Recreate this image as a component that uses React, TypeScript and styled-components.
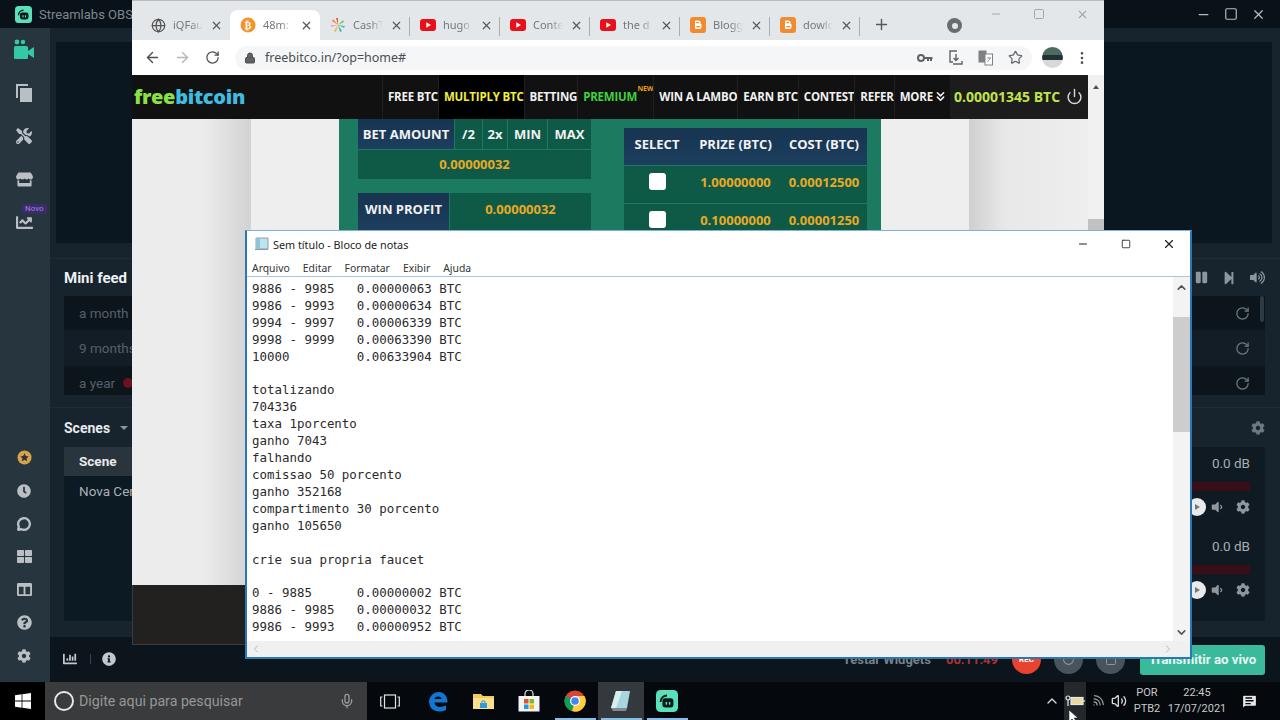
import React from "react";
import styled, { createGlobalStyle } from "styled-components";
import {
  ArrowLeft, ArrowRight, RotateCw, Lock, Star, X, Plus, Minus, Square, Globe, Power, ChevronsDown,
  ChevronUp, ChevronDown, ChevronLeft, ChevronRight, MessageCircle, Mic, Wifi, MessageSquareText, Volume2, EllipsisVertical
} from "lucide-react";
import {
  FaPause, FaStepForward, FaVolumeUp, FaVolumeDown, FaCog, FaInfoCircle, FaChartBar, FaTools, FaStore, FaChartLine, FaClock, FaThLarge, FaColumns, FaQuestionCircle
} from "react-icons/fa";

const Global = createGlobalStyle`
  html, body { margin: 0; padding: 0; background: #0a1219; overflow: hidden; }
  #root { width: 1280px; height: 720px; }
  * { box-sizing: border-box; }
`;

const Desktop = styled.div`
  position: relative; width: 1280px; height: 720px; overflow: hidden;
  display: flex; flex-direction: column; font-family: Roboto, sans-serif;
`;

/* ---------- OBS ---------- */
const Obs = styled.div`flex: 1; min-height: 0; display: flex; flex-direction: column; background: #17242d;`;
const ObsTitle = styled.div`
  height: 28px; flex: none; background: #0a1219; display: flex; align-items: center; padding: 0 0 0 15px;
  color: #7d878e; font-size: 13px; gap: 7px;
`;
const ObsControls = styled.div`
  margin-left: auto; display: flex; gap: 13px; padding-right: 14px; color: #b5bcc1; align-items: center;
`;
const ObsBody = styled.div`flex: 1; min-height: 0; display: flex;`;
const Sidebar = styled.div`
  width: 50px; background: #27353f; display: flex; flex-direction: column; justify-content: space-between;
  padding: 6px 0 10px; flex: none;
`;
const SideGroup = styled.div<{ $gap: number; $h: number }>`
  display: flex; flex-direction: column; gap: ${p => p.$gap}px;
  & > * { height: ${p => p.$h}px; }
`;
const SideIcon = styled.div<{ $color?: string }>`
  position: relative; width: 48px; display: flex; align-items: center; justify-content: center;
  color: ${p => p.$color || "#b9bfc4"};
`;
const NewBadge = styled.span`
  position: absolute; left: 22px; top: -2px; font-size: 8px; line-height: 10px; padding: 0 3px;
  background: #3a2d66; color: #a47fe8; border-radius: 2px;
`;
const Main = styled.div`flex: 1; min-width: 0; display: flex; flex-direction: column;`;
const DisplayWrap = styled.div`padding: 14px 8px 0 6px;`;
const Display = styled.div`height: 201px; background: #0b1720;`;
const FeedPanel = styled.div`
  margin-top: 15px; height: 150px; flex: none; border-top: 1px solid #1e2c36; border-bottom: 1px solid #1e2c36;
  padding: 0 15px 0 14px;
`;
const PanelHead = styled.div`
  height: 37px; display: flex; align-items: center; justify-content: space-between; color: #eef1f3;
  font-size: 15px; font-weight: 700;
`;
const HeadIcons = styled.div`display: flex; gap: 14px; color: #8d969c; align-items: center;`;
const FeedList = styled.div`position: relative; display: flex; flex-direction: column;`;
const FeedRow = styled.div<{ $alt?: boolean; $h: number; $pt?: number }>`
  height: ${p => p.$h}px; padding: ${p => p.$pt || 0}px 15px 0; display: flex; align-items: center; justify-content: space-between;
  background: ${p => p.$alt ? "#131d25" : "#0c151c"}; color: #566068; font-size: 13.5px;
`;
const Dot = styled.span`display: inline-block; width: 10px; height: 10px; border-radius: 50%; background: #6a1220; margin-left: 8px;`;
const Thumb = styled.span`position: absolute; right: 1px; top: 0; width: 4px; height: 26px; background: #2c3a44; border-radius: 2px;`;
const ReplayWrap = styled.span`color: #6e787f; display: flex;`;
const ScenesRow = styled.div`flex: 1; min-height: 0; display: flex; gap: 12px; padding: 0 15px 16px 14px;`;
const ScenesCol = styled.div`width: 560px; display: flex; flex-direction: column;`;
const MixerCol = styled.div`flex: 1; display: flex; flex-direction: column;`;
const ColHead = styled.div`
  height: 39px; padding-top: 1px; display: flex; align-items: center; justify-content: space-between; gap: 12px;
  color: #e6eaed; font-size: 14px; font-weight: 700;
`;
const SceneTitle = styled.div`display: flex; align-items: center; gap: 10px;`;
const Caret = styled.span`width: 0; height: 0; border: 4px solid transparent; border-top-color: #8d969c; margin-top: 4px;`;
const SceneList = styled.div`flex: 1; background: #0c1a24;`;
const SceneItem = styled.div<{ $on?: boolean }>`
  height: 29px; margin-top: ${p => p.$on ? 0 : 1}px; padding: 0 0 2px 15px; display: flex; align-items: center; font-size: 13.5px;
  background: ${p => p.$on ? "#2a343c" : "transparent"}; color: ${p => p.$on ? "#e8ebed" : "#a8b0b5"};
  font-weight: ${p => p.$on ? 700 : 400};
`;
const MixerList = styled.div`flex: 1; background: #0f1a22; padding: 7px 15px 0 0;`;
const MixerItem = styled.div`height: 83px; display: flex; flex-direction: column; align-items: flex-end;`;
const Db = styled.div`font-size: 13.5px; color: #a8aeb2; height: 18px; line-height: 18px;`;
const Meter = styled.div`align-self: stretch; height: 9px; margin-top: 10px; background: #3a0e18;`;
const Strip = styled.div`display: flex; align-items: center; color: #8f979c; margin-top: 4px; height: 24px; gap: 12px;`;
const Slider = styled.span`
  position: relative; width: 18px; height: 18px; border-radius: 50%; background: #e8eaeb; margin-right: -8px; display: flex; align-items: center; justify-content: center;
`;
const SliderTri = styled.span`width: 0; height: 0; border: 3px solid transparent; border-left: 5px solid #777; margin-left: 4px;`;
const Footer = styled.div`
  height: 45px; flex: none; background: #0c151c; display: flex; align-items: center; padding: 0 15px 2px 13px; color: #c3c8cc;
`;
const FootSep = styled.span`width: 1px; height: 10px; background: #38434b; margin: 0 11px 0 13px;`;
const FootRight = styled.div`margin-left: auto; display: flex; align-items: center; padding-top: 2px;`;
const TestBtn = styled.span`font-size: 13px; font-weight: 700; color: #77818a; margin-right: 15px;`;
const Timer = styled.span`font-size: 13px; font-weight: 700; color: #b3312f; margin-right: 14px;`;
const Round = styled.span<{ $red?: boolean }>`
  width: 29px; height: 29px; border-radius: 50%; background: ${p => p.$red ? "#e8432f" : "#49535a"};
  color: ${p => p.$red ? "#fff" : "#8d969c"}; display: flex; align-items: center; justify-content: center;
  font-size: 8px; font-weight: 700; margin-right: 13px;
`;
const GoLive = styled.span`
  width: 125px; height: 30px; background: #3ab99b; border-radius: 3px; color: #e8f7f3; display: flex;
  align-items: center; justify-content: center; font-size: 13.3px; font-weight: 700; margin-left: 2px;
`;

/* ---------- Chrome ---------- */
const Chrome = styled.div`
  position: absolute; left: 132px; top: 0; width: 972px; height: 645px; display: flex; flex-direction: column;
`;
const TabStrip = styled.div`
  height: 40px; flex: none; background: #e4e7ea; border-top: 1px solid #b9bdc1; display: flex; align-items: flex-end; padding-left: 8px; position: relative;
`;
const Tab = styled.div<{ $active?: boolean; $sep?: boolean }>`
  position: relative; width: 90px; height: 30px; flex: none; display: flex; align-items: center; padding-left: 10px;
  background: ${p => p.$active ? "#fff" : "transparent"}; border-radius: 8px 8px 0 0; color: #74787c; font-size: 11px;
  ${p => p.$sep && `&:after { content: ""; position: absolute; right: 0; top: 7px; height: 19px; width: 1px; background: #a9adb1; }`}
`;
const Favicon = styled.span`width: 16px; height: 16px; flex: none; display: flex; align-items: center; justify-content: center;`;
const TabTitle = styled.span`
  margin-left: 7px; width: 30px; height: 16px; line-height: 16px; flex: none; overflow: hidden; white-space: nowrap; font-family: "Noto Sans", sans-serif;
  -webkit-mask-image: linear-gradient(90deg, #000 60%, transparent); mask-image: linear-gradient(90deg, #000 60%, transparent);
`;
const TabClose = styled.span`margin-left: 7px; display: flex; color: #55595d;`;
const NewTab = styled.span`margin-left: 13px; margin-bottom: 7px; display: flex; color: #55595d;`;
const Profile = styled.span`margin-left: 57px; margin-bottom: 7px; width: 15px; height: 15px; border-radius: 50%; background: #6a6d70; display: flex; align-items: center; justify-content: center;`;
const ProfileDot = styled.span`width: 6px; height: 6px; border-radius: 50%; background: #e4e7ea;`;
const WinCtl = styled.div`position: absolute; top: 7px; right: 15px; display: flex; gap: 31px; color: #a3a7ab;`;
const Toolbar = styled.div`
  height: 35px; flex: none; background: #fff; display: flex; align-items: center; padding-left: 5px; color: #5f6368;
`;
const NavBtn = styled.span<{ $dim?: boolean }>`width: 30px; display: flex; justify-content: center; color: ${p => p.$dim ? "#b4b7ba" : "#4b4f53"};`;
const Omnibox = styled.div`
  margin-left: 8px; width: 797px; height: 24px; border-radius: 12px; background: #f5f6f7; display: flex; align-items: center; padding-left: 9px;
  font-family: "Noto Sans", sans-serif; font-size: 12.5px; color: #4a4e52;
`;
const Url = styled.span`margin-left: 9px;`;
const OmniIcons = styled.span`margin-left: auto; display: flex; gap: 15px; padding-right: 9px; color: #666a6e; align-items: center;`;
const Avatar = styled.span`
  margin-left: 10px; width: 21px; height: 21px; border-radius: 50%;
  background: linear-gradient(#4d6a5f 0 40%, #22303a 40% 60%, #d8d8d8 60%);
`;
const Kebab = styled.span`margin-left: 11px; display: flex; color: #4b4f53;`;
const SiteArea = styled.div`height: 510px; flex: none; display: flex; position: relative;`;
const SiteColumn = styled.div`width: 956px; display: flex; flex-direction: column; height: 510px;`;
const SiteBar = styled.div`
  height: 44px; flex: none; background: #111; display: flex; align-items: center;
  font-family: "Open Sans", sans-serif; font-weight: 700; font-size: 11.5px; color: #f2f2f2; letter-spacing: -0.2px;
`;
const Logo = styled.div`
  width: 250px; flex: none; padding: 0 0 2px 2px; font-family: "Open Sans", sans-serif; font-size: 20px; font-weight: 800; letter-spacing: -0.3px; color: #3fbde0;
`;
const LogoFree = styled.span`color: #8be04a;`;
const NavItem = styled.div<{ $color?: string; $black?: boolean; $mr?: number }>`
  height: 100%; display: flex; align-items: center; color: ${p => p.$color || "#f2f2f2"};
  background: ${p => p.$black ? "#000" : "transparent"}; white-space: nowrap; position: relative;
  border-left: 1px solid #1f1f1f; padding: 0 0 2px 5px; margin-right: ${p => p.$mr || 0}px;
`;
const NewTag = styled.sup`position: absolute; right: -16px; top: 10px; color: #e69a12; font-size: 7px; line-height: 8px;`;
const Balance = styled.div`
  margin-left: auto; flex: none; height: 100%; width: 138px; background: #1c1c1c; display: flex; align-items: center; padding: 0 0 2px 4px;
  color: #c2e24a; font-size: 14px; letter-spacing: 0; gap: 6px; white-space: nowrap;
`;
const PowerWrap = styled.span`display: flex; color: #d8d8d8;`;
const Page = styled.div`height: 466px; flex: none; display: flex; background: #eee; overflow: hidden;`;
const GutterL = styled.div`width: 119px; flex: none; background: linear-gradient(90deg, #ececec 0 60%, #d2d2d2 100%);`;
const GutterR = styled.div`flex: 1; background: linear-gradient(90deg, #cfcfcf 0, #e8e8e8 30%, #eee 100%);`;
const Content = styled.div`width: 718px; flex: none; background: #eee; padding-left: 88px;`;
const GreenPanel = styled.div`
  width: 542px; height: 112px; background: #1b7a5f; display: flex; padding: 0 14px 0 19px; gap: 33px;
  font-family: "Open Sans", sans-serif; font-weight: 700; font-size: 13px; color: #f2f2f2;
`;
const BetCol = styled.div`width: 233px; display: flex; flex-direction: column;`;
const BetRow = styled.div`display: flex; height: 30px; gap: 1px;`;
const NavyLabel = styled.div<{ $w: number }>`
  width: ${p => p.$w}px; flex: none; background: linear-gradient(#173450, #1d3e5e); display: flex; align-items: center; justify-content: center; white-space: nowrap;
`;
const SmallBtn = styled.div<{ $w: number }>`width: ${p => p.$w}px; flex: none; background: #0f5a47; display: flex; align-items: center; justify-content: center;`;
const Amount = styled.div<{ $mt?: number; $h: number }>`
  flex: 1 0 auto; min-height: ${p => p.$h}px; max-height: ${p => p.$h}px; background: #0f5a47; margin-top: ${p => p.$mt || 0}px; padding-bottom: 2px; display: flex; align-items: center; justify-content: center; color: #e8a925;
`;
const ProfitRow = styled.div`display: flex; height: 37px; gap: 1px; margin-top: 14px; & > * { padding-bottom: 6px; }`;
const Table = styled.div`width: 243px; margin-top: 9px; display: flex; flex-direction: column; gap: 1px;`;
const TableRow = styled.div<{ $head?: boolean }>`
  display: grid; grid-template-columns: 66px 91px 86px; height: 37px; padding-bottom: 6px; flex: none; align-items: center; justify-items: center;
  background: ${p => p.$head ? "linear-gradient(#173450, #1d3e5e)" : "#0f5a47"}; color: ${p => p.$head ? "#f2f2f2" : "#e8a925"};
`;
const Check = styled.span`width: 17px; height: 17px; border-radius: 3px; background: #fff; display: block;`;
const Scrollbar = styled.div`
  width: 16px; flex: none; height: 510px; background: #f1f1f1; display: flex; flex-direction: column; align-items: center; padding-top: 7px;
`;
const UpTri = styled.span`width: 0; height: 0; border: 3px solid transparent; border-bottom: 4px solid #505050;`;
const SbThumb = styled.span`width: 16px; height: 12px; background: #c1c1c1; margin-top: 130px;`;
const ChromeFoot = styled.div`flex: 1; background: #232120; border: 1px solid #363e42; border-top: 0;`;

/* ---------- Notepad ---------- */
const Notepad = styled.div`
  position: absolute; left: 245px; top: 230px; width: 947px; height: 429px; background: #fff;
  border: 2px solid #2a77b8; border-top: 1px solid #7fb2da; display: flex; flex-direction: column;
  font-family: "Noto Sans", sans-serif; color: #222;
`;
const NpTitle = styled.div`height: 26px; flex: none; display: flex; align-items: center; padding-left: 7px; font-size: 10.8px; gap: 4px;`;
const NpCtl = styled.div`margin-left: auto; display: flex; align-items: center; color: #222;`;
const NpCtlBtn = styled.span`width: 43px; display: flex; justify-content: center;`;
const NpMenu = styled.div`height: 20px; flex: none; display: flex; align-items: center; padding: 2px 0 0 5px; gap: 13px; font-size: 10.4px; color: #333; border-bottom: 1px solid #a8c6de;`;
const NpBody = styled.div`flex: 1; min-height: 0; display: flex;`;
const NpText = styled.pre`
  flex: 1; margin: 0; padding: 4px 0 0 5px; font-family: "DejaVu Sans Mono", monospace; font-size: 12.45px; line-height: 16.9px; color: #2a2a2a; overflow: hidden;
`;
const NpScroll = styled.div`width: 17px; flex: none; background: #f3f3f3; display: flex; flex-direction: column; align-items: center; color: #555;`;
const NpThumb = styled.span`width: 17px; height: 115px; background: #cdcdcd; margin-top: 23px; margin-bottom: auto;`;
const NpArrow = styled.span<{ $top?: number; $bottom?: number }>`display: flex; padding-top: ${p => p.$top || 0}px; padding-bottom: ${p => p.$bottom || 0}px;`;
const NpH = styled.div`height: 16px; flex: none; background: #f0f0f0; display: flex; align-items: center; justify-content: space-between; padding: 0 16px 0 3px; color: #bbb;`;

/* ---------- Taskbar ---------- */
const Taskbar = styled.div`height: 38px; flex: none; background: #05090e; display: flex; align-items: stretch; color: #e8e8e8;`;
const Start = styled.div`width: 45px; background: #000; display: flex; align-items: center; justify-content: center; flex: none;`;
const Search = styled.div`
  width: 322px; background: #3a3b3c; display: flex; align-items: center; padding: 0 12px 0 9px; color: #979797; font-size: 14.2px; gap: 5px; flex: none;
`;
const Cortana = styled.span`width: 20px; height: 20px; border: 2.5px solid #e8e8e8; border-radius: 50%; flex: none;`;
const MicWrap = styled.span`margin-left: auto; display: flex; color: #9a9a9a;`;
const Tile = styled.div<{ $active?: boolean; $open?: boolean; $ml?: number }>`
  position: relative; width: 46px; flex: none; display: flex; align-items: center; justify-content: center;
  background: ${p => p.$active ? "#34393d" : "transparent"}; margin-left: ${p => p.$ml || 0}px;
  ${p => p.$open && `&:after { content: ""; position: absolute; left: 3px; right: 2px; bottom: 0; height: 2px; background: #88bde6; }`}
`;
const Tray = styled.div`margin-left: auto; display: flex; align-items: center; color: #d8d8d8;`;
const TrayIcon = styled.span<{ $w: number; $active?: boolean; $dim?: boolean }>`
  width: ${p => p.$w}px; height: 100%; display: flex; align-items: center; justify-content: center;
  background: ${p => p.$active ? "#24282b" : "transparent"}; color: ${p => p.$dim ? "#9a9a9a" : "inherit"};
`;
const WifiTilt = styled.span`display: flex; transform: rotate(45deg);`;
const TrayText = styled.div<{ $w: number }>`width: ${p => p.$w}px; text-align: center; line-height: 16px; font-size: 11px; color: #c8c8c8;`;
const Cursor = styled.svg`position: absolute; left: 1069px; top: 710px;`;

const NotepadIcon = () => (
  <svg width="15" height="14" viewBox="0 0 15 14">
    <path d="M2 1h12v11H2z" fill="#bfe3ee" stroke="#6f8f9a" strokeWidth="0.8" />
    <path d="M2 1h4v11H2z" fill="#8fc3d6" />
    <path d="M1 12h13v1H1z" fill="#8a9aa3" />
  </svg>
);
const Yt = () => (
  <svg width="16" height="12" viewBox="0 0 16 12"><rect width="16" height="12" rx="3" fill="#e8101a" /><path d="M6.3 3.2v5.6L11 6z" fill="#fff" /></svg>
);
const Blogger = () => (
  <svg width="16" height="16" viewBox="0 0 16 16">
    <rect width="16" height="16" rx="3" fill="#f28a2e" />
    <path d="M5 4.5c0-.6.4-1 1-1h2.5c1.200 0 2 .8 2 2v1c0 .3.2.5.5.5s.5.3.5.6v2.400c0 1-.8 2-2 2H6c-.6 0-1-.4-1-1z" fill="#fff" />
    <path d="M6.800 5.700h1.700M6.800 9.600h3" stroke="#f28a2e" strokeWidth="1.2" strokeLinecap="round" />
  </svg>
);
const Btc = () => (
  <svg width="16" height="16" viewBox="0 0 16 16"><circle cx="8" cy="8" r="7.5" fill="#f4932a" /><text x="8" y="11.5" fontSize="10" fontWeight="700" textAnchor="middle" fill="#fff" fontFamily="DejaVu Sans">₿</text></svg>
);
const Pinwheel = () => (
  <svg width="16" height="16" viewBox="0 0 16 16">
    <path d="M8 8 6 1h2z" fill="#e9574b" /><path d="M8 8l5-5 1 2z" fill="#7ac943" /><path d="M8 8l7 1-1 2z" fill="#4db6e2" />
    <path d="M8 8l4 6-2 1z" fill="#46b58a" /><path d="M8 8l-2 7-2-1z" fill="#f2b632" /><path d="M8 8l-7 2V8z" fill="#e9a0c0" /><path d="M8 8 2 4l1-2z" fill="#f28a2e" />
  </svg>
);
const Camera = () => (
  <svg width="20" height="22" viewBox="0 0 20 22" fill="#34c9a6">
    <circle cx="3" cy="3" r="2.4" /><circle cx="9" cy="3" r="2.2" /><rect x="0" y="7" width="14" height="13" rx="1.5" /><path d="M14 12l6-4v11l-6-4z" />
  </svg>
);
const Sources = () => (
  <svg width="16" height="18" viewBox="0 0 16 18" fill="#b9bfc4">
    <path d="M0 0h12v2H2v12H0z" /><rect x="4" y="4" width="12" height="14" />
  </svg>
);
const GoldStar = () => (
  <svg width="15" height="15" viewBox="0 0 16 16">
    <circle cx="8" cy="8" r="7.5" fill="#d8a24a" />
    <path d="M8 3.500l1.400 2.900 3.100.4-2.300 2.100.6 3.100L8 10.500l-2.800 1.500.6-3.100L3.500 6.800l3.100-.4z" fill="#2b3238" />
  </svg>
);
const StreamlabsLogo = ({ size }: { size: number }) => (
  <svg width={size} height={size} viewBox="0 0 24 24">
    <rect width="24" height="24" rx="5" fill="#5ae0bd" />
    <path d="M5 13c0-4 3-7 7-7" fill="none" stroke="#0b1a17" strokeWidth="2" />
    <rect x="7" y="9" width="12" height="10" rx="3" fill="#0b1a17" />
    <rect x="10.5" y="13" width="1.6" height="3" fill="#5ae0bd" /><rect x="14" y="13" width="1.6" height="3" fill="#5ae0bd" />
  </svg>
);
const WinLogo = () => (
  <svg width="16" height="16" viewBox="0 0 16 16" fill="#fff">
    <path d="M0 2.300 6.600 1.300v6.200H0zM7.400 1.200 16 0v7.500H7.400zM0 8.400h6.600v6.300L0 13.700zM7.400 8.400H16V16l-8.600-1.200z" />
  </svg>
);
const TaskView = () => (
  <svg width="20" height="15" viewBox="0 0 20 15" fill="none" stroke="#e4e4e4" strokeWidth="1.2">
    <rect x="4.500" y="1" width="11" height="13" /><path d="M2.500 3H.7v9h1.800M17.500 3h1.800v9h-1.800" />
  </svg>
);
const Edge = () => (
  <svg width="20" height="21" viewBox="0 0 20 21">
    <path d="M1 10C2 3.500 7 .7 11 .9c5 .2 8.500 4 8.500 10.600H6.500c.2 4.500 6 6 11.500 2.800v4.700c-6 3-15 1.600-16.300-5.200C1.200 12 1 11 1 10zm5.600-2h7c0-3-6-3.500-7 0z" fill="#0f78d4" />
  </svg>
);
const Folder = () => (
  <svg width="21" height="18" viewBox="0 0 21 18">
    <path d="M0 2h8l2 2h11v13H0z" fill="#f5c95e" /><path d="M0 6h21v11H0z" fill="#fbe08c" />
    <path d="M7 11h7v5H7z" fill="#2f9bd8" /><path d="M9 11V9h3v2" fill="none" stroke="#2f9bd8" />
  </svg>
);
const StoreIcon = () => (
  <svg width="22" height="22" viewBox="0 0 22 22">
    <path d="M7 6V4a4 4 0 0 1 8 0v2" fill="none" stroke="#e8e8e8" strokeWidth="1.2" />
    <rect x="0.500" y="6" width="21" height="15.500" fill="#f4f4f4" />
    <rect x="6" y="9" width="4.500" height="4.500" fill="#e8502a" /><rect x="11.500" y="9" width="4.500" height="4.500" fill="#7db928" />
    <rect x="6" y="14.500" width="4.500" height="4.500" fill="#1f9ce8" /><rect x="11.500" y="14.500" width="4.500" height="4.500" fill="#f6b812" />
  </svg>
);
const ChromeLogo = () => (
  <svg width="22" height="22" viewBox="0 0 22 22">
    <circle cx="11" cy="11" r="10.500" fill="#db4437" />
    <path d="M11 11 1.900 5.700A10.500 10.500 0 0 0 8 21.100z" fill="#0f9d58" />
    <path d="M11 11l-3 10.100A10.500 10.500 0 0 0 20.400 6H11z" fill="#ffcd40" />
    <circle cx="11" cy="11" r="5" fill="#fff" /><circle cx="11" cy="11" r="3.800" fill="#4285f4" />
  </svg>
);
const BigNotepad = () => (
  <svg width="24" height="24" viewBox="0 0 24 24">
    <path d="M7 2h14l-3 17H2z" fill="#a9d5de" /><path d="M7 2h6L7 19H2z" fill="#d9eef1" />
    <path d="M2 19h16l-1 3H4z" fill="#7f8b90" />
  </svg>
);
const Battery = () => (
  <svg width="20" height="12" viewBox="0 0 20 12" fill="none" stroke="#e8e8e8" strokeWidth="1.2">
    <circle cx="3" cy="3" r="2" /><path d="M3 5v6" /><rect x="6" y="2.500" width="12" height="7" fill="#e8d9a0" /><path d="M19 5v2" />
  </svg>
);
const KeyGlyph = () => (
  <svg width="16" height="10" viewBox="0 0 16 10" fill="none" stroke="#5f6368" strokeWidth="2">
    <circle cx="4" cy="5" r="3" /><path d="M7 5h8.500M11 5v3M14 5v3" />
  </svg>
);
const InstallGlyph = () => (
  <svg width="15" height="16" viewBox="0 0 15 16" fill="none" stroke="#5f6368" strokeWidth="1.4">
    <path d="M9 1H2v11h3M8 4v6M5.500 8 8 10.500 10.500 8M5 14h9v-3" />
  </svg>
);
const TranslateGlyph = () => (
  <svg width="15" height="16" viewBox="0 0 15 16">
    <rect x="0.500" y="0.500" width="8" height="12" fill="#7d8185" />
    <rect x="7" y="4" width="7.500" height="11" fill="#fff" stroke="#7d8185" />
    <path d="M9 8h4M11 7v1M9.500 12l3-4" stroke="#7d8185" strokeWidth="0.8" fill="none" />
  </svg>
);

const text = `9886 - 9985   0.00000063 BTC
9986 - 9993   0.00000634 BTC
9994 - 9997   0.00006339 BTC
9998 - 9999   0.00063390 BTC
10000         0.00633904 BTC

totalizando
704336
taxa 1porcento
ganho 7043
falhando
comissao 50 porcento
ganho 352168
compartimento 30 porcento
ganho 105650

crie sua propria faucet

0 - 9885      0.00000002 BTC
9886 - 9985   0.00000032 BTC
9986 - 9993   0.00000952 BTC`;

const tabs = [
  { icon: <Globe size={15} color="#555" />, t: "iQFau" },
  { icon: <Btc />, t: "48m:", active: true },
  { icon: <Pinwheel />, t: "CashT", sep: true },
  { icon: <Yt />, t: "hugo", sep: true },
  { icon: <Yt />, t: "Conte", sep: true },
  { icon: <Yt />, t: "the d", sep: true },
  { icon: <Blogger />, t: "Blogg", sep: true },
  { icon: <Blogger />, t: "dowlo", sep: true },
];

const MixerStrip = () => (
  <MixerItem>
    <Db>0.0 dB</Db><Meter />
    <Strip><Slider><SliderTri /></Slider><FaVolumeDown size={14} /><FaCog size={14} /></Strip>
  </MixerItem>
);

export default function App() {
  return (
    <Desktop>
      <Global />
      <Obs>
        <ObsTitle>
          <StreamlabsLogo size={17} />
          <span>Streamlabs OBS</span>
          <ObsControls>
            <Minus size={15} /><Square size={14} /><X size={15} />
          </ObsControls>
        </ObsTitle>
        <ObsBody>
          <Sidebar>
            <SideGroup $gap={11} $h={32}>
              <SideIcon><Camera /></SideIcon>
              <SideIcon><Sources /></SideIcon>
              <SideIcon><FaTools size={16} /></SideIcon>
              <SideIcon><FaStore size={17} /></SideIcon>
              <SideIcon><NewBadge>Novo</NewBadge><FaChartLine size={17} /></SideIcon>
            </SideGroup>
            <SideGroup $gap={0} $h={33}>
              <SideIcon><GoldStar /></SideIcon>
              <SideIcon><FaClock size={14} /></SideIcon>
              <SideIcon><MessageCircle size={14} strokeWidth={4} /></SideIcon>
              <SideIcon><FaThLarge size={15} /></SideIcon>
              <SideIcon><FaColumns size={15} /></SideIcon>
              <SideIcon><FaQuestionCircle size={15} /></SideIcon>
              <SideIcon><FaCog size={14} /></SideIcon>
            </SideGroup>
          </Sidebar>
          <Main>
            <DisplayWrap><Display /></DisplayWrap>
            <FeedPanel>
              <PanelHead>
                <span>Mini feed</span>
                <HeadIcons>
                  <FaPause size={13} /><FaStepForward size={14} /><FaVolumeUp size={15} />
                </HeadIcons>
              </PanelHead>
              <FeedList>
                <Thumb />
                <FeedRow $h={34}><span>a month</span><ReplayWrap><RotateCw size={15} /></ReplayWrap></FeedRow>
                <FeedRow $h={36} $alt><span>9 months</span><ReplayWrap><RotateCw size={15} /></ReplayWrap></FeedRow>
                <FeedRow $h={29} $pt={5}><span>a year<Dot /></span><ReplayWrap><RotateCw size={15} /></ReplayWrap></FeedRow>
              </FeedList>
            </FeedPanel>
            <ScenesRow>
              <ScenesCol>
                <ColHead><SceneTitle>Scenes<Caret /></SceneTitle></ColHead>
                <SceneList>
                  <SceneItem $on>Scene</SceneItem>
                  <SceneItem>Nova Cena</SceneItem>
                </SceneList>
              </ScenesCol>
              <MixerCol>
                <ColHead><span>Mixer</span><ReplayWrap><FaCog size={14} /></ReplayWrap></ColHead>
                <MixerList>
                  <MixerStrip />
                  <MixerStrip />
                </MixerList>
              </MixerCol>
            </ScenesRow>
            <Footer>
              <FaChartBar size={14} />
              <FootSep />
              <FaInfoCircle size={14} />
              <FootRight>
                <TestBtn>Testar Widgets</TestBtn>
                <Timer>00:11:49</Timer>
                <Round $red>REC</Round>
                <Round><RotateCw size={13} /></Round>
                <Round><Square size={12} /></Round>
                <GoLive>Transmitir ao vivo</GoLive>
              </FootRight>
            </Footer>
          </Main>
        </ObsBody>
      </Obs>

      <Chrome>
        <TabStrip>
          {tabs.map((t) => (
            <Tab key={t.t} $active={t.active} $sep={t.sep}>
              <Favicon>{t.icon}</Favicon>
              <TabTitle>{t.t}</TabTitle>
              <TabClose><X size={13} strokeWidth={2.2} /></TabClose>
            </Tab>
          ))}
          <NewTab><Plus size={17} /></NewTab>
          <Profile><ProfileDot /></Profile>
          <WinCtl>
            <Minus size={12} /><Square size={12} /><X size={13} />
          </WinCtl>
        </TabStrip>
        <Toolbar>
          <NavBtn><ArrowLeft size={17} /></NavBtn>
          <NavBtn $dim><ArrowRight size={17} /></NavBtn>
          <NavBtn><RotateCw size={15} /></NavBtn>
          <Omnibox>
            <Lock size={12} fill="#5f6368" />
            <Url>freebitco.in/?op=home#</Url>
            <OmniIcons>
              <KeyGlyph /><InstallGlyph /><TranslateGlyph /><Star size={15} />
            </OmniIcons>
          </Omnibox>
          <Avatar />
          <Kebab><EllipsisVertical size={16} /></Kebab>
        </Toolbar>
        <SiteArea>
          <SiteColumn>
            <SiteBar>
              <Logo><LogoFree>free</LogoFree>bitcoin</Logo>
              <NavItem>FREE BTC</NavItem>
              <NavItem $color="#f2ef3a" $black>MULTIPLY BTC</NavItem>
              <NavItem>BETTING</NavItem>
              <NavItem $color="#3fd23f" $mr={16}>PREMIUM<NewTag>NEW</NewTag></NavItem>
              <NavItem>WIN A LAMBO</NavItem>
              <NavItem>EARN BTC</NavItem>
              <NavItem>CONTEST</NavItem>
              <NavItem>REFER</NavItem>
              <NavItem>MORE<ChevronsDown size={15} strokeWidth={2.5} /></NavItem>
              <Balance>0.00001345 BTC<PowerWrap><Power size={17} /></PowerWrap></Balance>
            </SiteBar>
            <Page>
              <GutterL />
              <Content>
                <GreenPanel>
                  <BetCol>
                    <BetRow>
                      <NavyLabel $w={96}>BET AMOUNT</NavyLabel>
                      <SmallBtn $w={27}>/2</SmallBtn><SmallBtn $w={24}>2x</SmallBtn><SmallBtn $w={39}>MIN</SmallBtn><SmallBtn $w={43}>MAX</SmallBtn>
                    </BetRow>
                    <Amount $mt={1} $h={29}>0.00000032</Amount>
                    <ProfitRow>
                      <NavyLabel $w={91}>WIN PROFIT</NavyLabel>
                      <Amount $h={37}>0.00000032</Amount>
                    </ProfitRow>
                  </BetCol>
                  <Table>
                    <TableRow $head><span>SELECT</span><span>PRIZE (BTC)</span><span>COST (BTC)</span></TableRow>
                    <TableRow><Check /><span>1.00000000</span><span>0.00012500</span></TableRow>
                    <TableRow><Check /><span>0.10000000</span><span>0.00001250</span></TableRow>
                  </Table>
                </GreenPanel>
              </Content>
              <GutterR />
            </Page>
          </SiteColumn>
          <Scrollbar><UpTri /><SbThumb /></Scrollbar>
        </SiteArea>
        <ChromeFoot />
      </Chrome>

      <Notepad>
        <NpTitle>
          <NotepadIcon />
          <span>Sem título - Bloco de notas</span>
          <NpCtl>
            <NpCtlBtn><Minus size={12} /></NpCtlBtn>
            <NpCtlBtn><Square size={10} /></NpCtlBtn>
            <NpCtlBtn><X size={14} /></NpCtlBtn>
          </NpCtl>
        </NpTitle>
        <NpMenu><span>Arquivo</span><span>Editar</span><span>Formatar</span><span>Exibir</span><span>Ajuda</span></NpMenu>
        <NpBody>
          <NpText>{text}</NpText>
          <NpScroll>
            <NpArrow $top={4}><ChevronUp size={13} strokeWidth={3} /></NpArrow>
            <NpThumb />
            <NpArrow $bottom={2}><ChevronDown size={13} strokeWidth={3} /></NpArrow>
          </NpScroll>
        </NpBody>
        <NpH><ChevronLeft size={12} /><ChevronRight size={12} /></NpH>
      </Notepad>

      <Taskbar>
        <Start><WinLogo /></Start>
        <Search><Cortana /><span>Digite aqui para pesquisar</span><MicWrap><Mic size={16} /></MicWrap></Search>
        <Tile><TaskView /></Tile>
        <Tile $ml={2}><Edge /></Tile>
        <Tile $ml={-1}><Folder /></Tile>
        <Tile><StoreIcon /></Tile>
        <Tile $open><ChromeLogo /></Tile>
        <Tile $active $open><BigNotepad /></Tile>
        <Tile $open><StreamlabsLogo size={22} /></Tile>
        <Tray>
          <TrayIcon $w={24}><ChevronUp size={16} /></TrayIcon>
          <TrayIcon $w={22} $active><Battery /></TrayIcon>
          <TrayIcon $w={23} $dim><WifiTilt><Wifi size={15} /></WifiTilt></TrayIcon>
          <TrayIcon $w={20}><Volume2 size={16} /></TrayIcon>
          <TrayText $w={36}>POR<br />PTB2</TrayText>
          <TrayText $w={64}>22:45<br />17/07/2021</TrayText>
          <TrayIcon $w={40}><MessageSquareText size={17} fill="#e8e8e8" color="#05090e" /></TrayIcon>
          <TrayIcon $w={11} />
        </Tray>
      </Taskbar>
      <Cursor width="10" height="12" viewBox="0 0 10 12"><path d="M0 0v12l3-3 3 3h2L5 8h4z" fill="#fff" stroke="#111" strokeWidth="0.5" /></Cursor>
    </Desktop>
  );
}
